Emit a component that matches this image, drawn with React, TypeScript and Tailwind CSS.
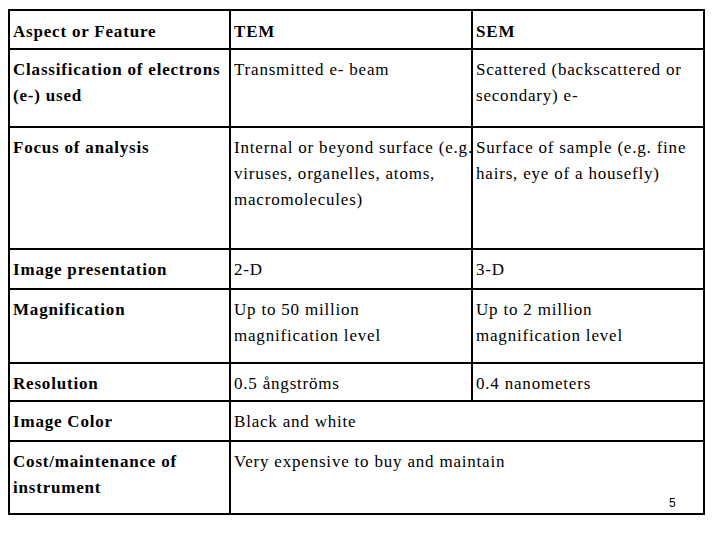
const rows: { label: string[]; tem: string[]; sem?: string[]; h: string }[] = [
  { label: ["Classification of electrons", "(e-) used"], tem: ["Transmitted e- beam"], sem: ["Scattered (backscattered or", "secondary) e-"], h: "h-[78px]" },
  { label: ["Focus of analysis"], tem: ["Internal or beyond surface (e.g.", "viruses, organelles, atoms,", "macromolecules)"], sem: ["Surface of sample (e.g. fine", "hairs, eye of a housefly)"], h: "h-[122px]" },
  { label: ["Image presentation"], tem: ["2-D"], sem: ["3-D"], h: "h-[40px]" },
  { label: ["Magnification"], tem: ["Up to 50 million", "magnification level"], sem: ["Up to 2 million", "magnification level"], h: "h-[74px]" },
  { label: ["Resolution"], tem: ["0.5 ångströms"], sem: ["0.4 nanometers"], h: "h-[38px]" },
  { label: ["Image Color"], tem: ["Black and white"], h: "h-[40px]" },
  { label: ["Cost/maintenance of", "instrument"], tem: ["Very expensive to buy and maintain"], h: "h-[73px]" },
];

const cell =
  "font-['Liberation_Serif','Times_New_Roman',serif] text-[17px] leading-[26px] tracking-[0.8px] border-2 border-black align-top pl-[3px] pr-0 pb-0";

function Lines({ text }: { text: string[] }) {
  return (
    <>
      {text.map((t, i) => (
        <div key={i} className="whitespace-nowrap">
          {t}
        </div>
      ))}
    </>
  );
}

export default function App() {
  return (
    <div className="relative w-[720px] h-[540px] bg-white text-black overflow-hidden">
      <div className="pl-[8px] pt-[9px]">
        <table className="table-fixed border-collapse w-[695px]">
          <colgroup>
            <col className="w-[221px]" />
            <col className="w-[242px]" />
            <col className="w-[232px]" />
          </colgroup>
          <tbody>
            <tr className="h-[39px]">
              <td className={`${cell} pt-[8px] font-bold`}>Aspect or Feature</td>
              <td className={`${cell} pt-[8px] font-bold`}>TEM</td>
              <td className={`${cell} pt-[8px] font-bold`}>SEM</td>
            </tr>
            {rows.map((r, i) => (
              <tr key={i} className={r.h}>
                <td className={`${cell} pt-[7px] font-bold`}>
                  <Lines text={r.label} />
                </td>
                {r.sem ? (
                  <>
                    <td className={`${cell} pt-[7px]`}>
                      <Lines text={r.tem} />
                    </td>
                    <td className={`${cell} pt-[7px]`}>
                      <Lines text={r.sem} />
                    </td>
                  </>
                ) : (
                  <td colSpan={2} className={`${cell} pt-[7px]`}>
                    <Lines text={r.tem} />
                  </td>
                )}
              </tr>
            ))}
          </tbody>
        </table>
      </div>

      {/* slide number */}
      <span className="absolute left-[669px] top-[497px] font-['Liberation_Sans',Arial,sans-serif] text-[12px] leading-none">
        5
      </span>
    </div>
  );
}
